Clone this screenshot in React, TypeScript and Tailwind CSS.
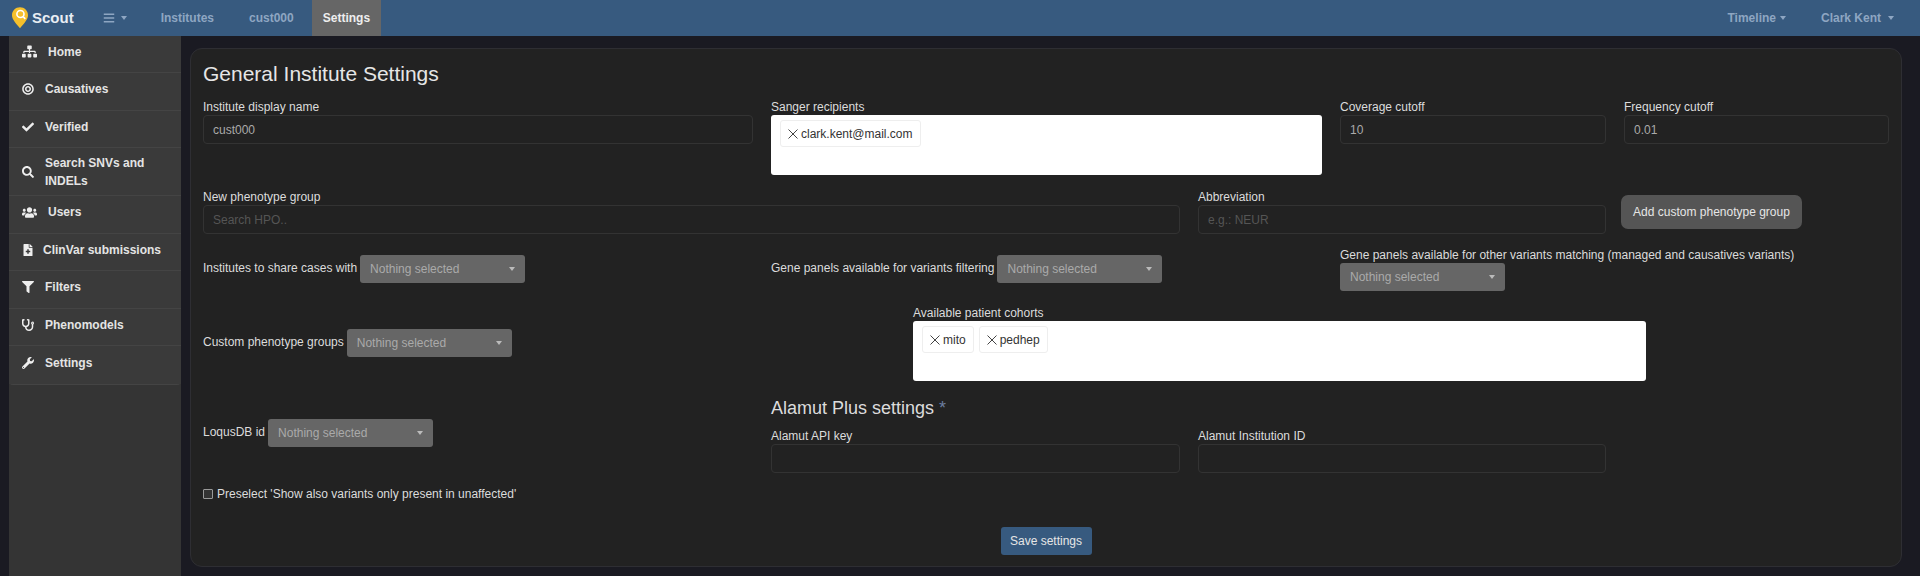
import React from 'react';
import {
  FaBars,
  FaBullseye,
  FaCheck,
  FaFileMedical,
  FaFilter,
  FaSearch,
  FaSitemap,
  FaStethoscope,
  FaUsers,
  FaWrench,
} from 'react-icons/fa';

const sideItems = [
  { label: 'Home', icon: FaSitemap, size: 15, row: 'h-[37px] pb-[5px]', text: 'ml-[11px]' },
  { label: 'Causatives', icon: FaBullseye, size: 12, row: 'h-[38px] pb-[5px]', text: 'ml-[11px]' },
  { label: 'Verified', icon: FaCheck, size: 12, row: 'h-[37px] pb-[5px]', text: 'ml-[11px]' },
  { label: 'Search SNVs and INDELs', icon: FaSearch, size: 12, row: 'h-[48px] pt-[1px]', text: 'ml-[11px]' },
  { label: 'Users', icon: FaUsers, size: 15, row: 'h-[38px] pb-[5px]', text: 'ml-[11px]' },
  { label: 'ClinVar submissions', icon: FaFileMedical, size: 12, row: 'h-[37px] pb-[5px]', text: 'ml-[9px]' },
  { label: 'Filters', icon: FaFilter, size: 12, row: 'h-[38px] pb-[5px]', text: 'ml-[11px]' },
  { label: 'Phenomodels', icon: FaStethoscope, size: 12, row: 'h-[37px] pb-[5px]', text: 'ml-[11px]' },
  { label: 'Settings', icon: FaWrench, size: 12, row: 'h-[38px] pb-[5px]', text: 'ml-[11px]' },
];

const Caret = ({ className = '' }: { className?: string }) => (
  <span className={`inline-block w-0 h-0 border-x-[3px] border-x-transparent border-t-[4px] ${className}`} />
);

const Label = ({ children }: { children: React.ReactNode }) => (
  <label className="block text-[12px] leading-[16px] text-[#dcdcdc]">{children}</label>
);

const TextInput = ({ value, placeholder }: { value?: string; placeholder?: string }) => (
  <div className="h-[29px] px-[9px] flex items-center rounded-[4px] border border-[#333] text-[12px]">
    {value && <span className="text-[#aaa]">{value}</span>}
    {placeholder && <span className="text-[#555]">{placeholder}</span>}
  </div>
);

const Select = () => (
  <div className="w-[165px] h-[28px] pl-[10px] pr-[10px] flex items-center justify-between rounded-[3px] bg-[#666] text-[12px] text-[#aaa] shrink-0">
    <span>Nothing selected</span>
    <Caret className="border-t-[#bbb]" />
  </div>
);

const Tag = ({ label }: { label: string }) => (
  <span className="h-[27px] px-[7px] flex items-center gap-[3px] rounded-[3px] border border-[#eee] text-[12px] text-[#333]">
    <svg width="10" height="10" viewBox="0 0 10 10" className="shrink-0">
      <path d="M0.5 0.5L9.5 9.5M9.5 0.5L0.5 9.5" stroke="#444" strokeWidth="1" fill="none" />
    </svg>
    {label}
  </span>
);

const TagBox = ({ tags }: { tags: string[] }) => (
  <div className="h-[60px] p-[5px_9px] flex items-start gap-[5px] rounded-[3px] bg-white">
    {tags.map((tag) => (
      <Tag key={tag} label={tag} />
    ))}
  </div>
);

const InlineSelect = ({ label }: { label: string }) => (
  <div className="flex items-center gap-[3px] text-[12px] text-[#dcdcdc]">
    <span className="pb-[3px]">{label}</span>
    <Select />
  </div>
);

const Logo = () => (
  <svg width="16" height="22" viewBox="0 0 18 24" className="shrink-0">
    <path d="M9 0C4 0 0 3.8 0 8.8C0 14 5.5 19 9 23.5C12.5 19 18 14 18 8.8C18 3.8 14 0 9 0Z" fill="#f5c02c" />
    <circle cx="9.5" cy="7.5" r="4" fill="none" stroke="#fff" strokeWidth="1.8" />
    <path d="M12.5 10.5L15 13" stroke="#fff" strokeWidth="1.8" />
  </svg>
);

const Navbar = () => (
  <nav className="h-[36px] bg-[#375a7f] flex items-center shrink-0 text-[12px] font-bold">
    <div className="ml-[12px] flex items-center gap-[4px]">
      <Logo />
      <span className="text-[15px] text-[#e8edf3]">Scout</span>
    </div>
    <div className="ml-[29px] flex items-center gap-[6px] text-[#8ea6c2]">
      <FaBars size={12} />
      <Caret className="border-t-[#8ea6c2]" />
    </div>
    <span className="ml-[34px] text-[#8ea6c2]">Institutes</span>
    <span className="ml-[35px] text-[#8ea6c2]">cust000</span>
    <span className="ml-[18px] h-full px-[11px] flex items-center bg-[#666] text-[#eee]">Settings</span>
    <div className="ml-auto flex items-center text-[#8ea6c2]">
      <span>Timeline</span>
      <Caret className="ml-[4px] border-t-[#8ea6c2]" />
      <span className="ml-[35px]">Clark Kent</span>
      <Caret className="ml-[7px] mr-[26px] border-t-[#8ea6c2]" />
    </div>
  </nav>
);

const Sidebar = () => (
  <aside className="ml-[9px] w-[172px] bg-[#343434] shrink-0 self-stretch">
    <ul className="rounded-b-[4px] border-b border-[#444]">
      {sideItems.map(({ label, icon: Icon, size, row, text }) => (
        <li key={label} className={`${row} pl-[13px] pr-[10px] flex items-center border-b border-[#444] last:border-b-0 bg-[#3a3a3a]`}>
          <Icon size={size} className="text-[#eee] shrink-0" />
          <span className={`${text} text-[12px] leading-[18px] font-bold text-[#e4e4e4]`}>{label}</span>
        </li>
      ))}
    </ul>
  </aside>
);

export default function App() {
  return (
    <div className="h-[576px] w-[1920px] overflow-hidden flex flex-col bg-[#1a1a22]" style={{ fontFamily: '"Liberation Sans", Arial, sans-serif' }}>
      <Navbar />
      <div className="flex flex-1 min-h-0">
        <Sidebar />
        <main className="ml-[9px] mt-[12px] mb-[9px] mr-[18px] flex-1 rounded-[12px] border border-[#2e2e33] bg-[#222] px-[12px] pt-[12px]">
          <h1 className="text-[21px] leading-[26px] text-[#e6e6e6]">General Institute Settings</h1>

          <div className="mt-[12px] grid grid-cols-[550px_551px_266px_265px] gap-x-[18px] w-[1686px]">
            <div>
              <Label>Institute display name</Label>
              <TextInput value="cust000" />
            </div>
            <div>
              <Label>Sanger recipients</Label>
              <TagBox tags={['clark.kent@mail.com']} />
            </div>
            <div>
              <Label>Coverage cutoff</Label>
              <TextInput value="10" />
            </div>
            <div>
              <Label>Frequency cutoff</Label>
              <TextInput value="0.01" />
            </div>
          </div>

          <div className="mt-[14px] flex items-center">
            <div className="w-[977px]">
              <Label>New phenotype group</Label>
              <TextInput placeholder="Search HPO.." />
            </div>
            <div className="ml-[18px] w-[408px]">
              <Label>Abbreviation</Label>
              <TextInput placeholder="e.g.: NEUR" />
            </div>
            <button className="ml-[15px] h-[34px] w-[181px] rounded-[7px] bg-[#555] text-[12px] text-[#e6e6e6]">Add custom phenotype group</button>
          </div>

          <div className="mt-[13px] grid grid-cols-[550px_551px_1fr] gap-x-[18px] w-[1686px] items-start">
            <div className="pt-[8px]">
              <InlineSelect label="Institutes to share cases with" />
            </div>
            <div className="pt-[8px]">
              <InlineSelect label="Gene panels available for variants filtering" />
            </div>
            <div>
              <Label>Gene panels available for other variants matching (managed and causatives variants)</Label>
              <Select />
            </div>
          </div>

          <div className="mt-[14px] flex items-start">
            <div className="w-[710px] pt-[24px]">
              <InlineSelect label="Custom phenotype groups" />
            </div>
            <div className="w-[733px]">
              <Label>Available patient cohorts</Label>
              <TagBox tags={['mito', 'pedhep']} />
            </div>
          </div>

          <div className="mt-[16px] flex">
            <div className="w-[568px] pt-[22px]">
              <InlineSelect label="LoqusDB id" />
            </div>
            <div>
              <h2 className="text-[18px] leading-[22px] text-[#dcdcdc]">
                Alamut Plus settings <span className="text-[#6b7da0]">*</span>
              </h2>
              <div className="mt-[9px] flex gap-x-[18px]">
                <div className="w-[409px]">
                  <Label>Alamut API key</Label>
                  <TextInput />
                </div>
                <div className="w-[408px]">
                  <Label>Alamut Institution ID</Label>
                  <TextInput />
                </div>
              </div>
            </div>
          </div>

          <div className="mt-[13px] flex items-center gap-[4px] text-[12px] leading-[16px] text-[#dcdcdc]">
            <span className="w-[10px] h-[10px] border border-[#999] rounded-[1px] bg-[#333]" />
            <span>Preselect 'Show also variants only present in unaffected'</span>
          </div>

          <div className="mt-[25px] flex justify-center">
            <button className="h-[28px] w-[91px] rounded-[3px] bg-[#375a7f] text-[12px] text-[#e6e6e6]">Save settings</button>
          </div>
        </main>
      </div>
    </div>
  );
}
